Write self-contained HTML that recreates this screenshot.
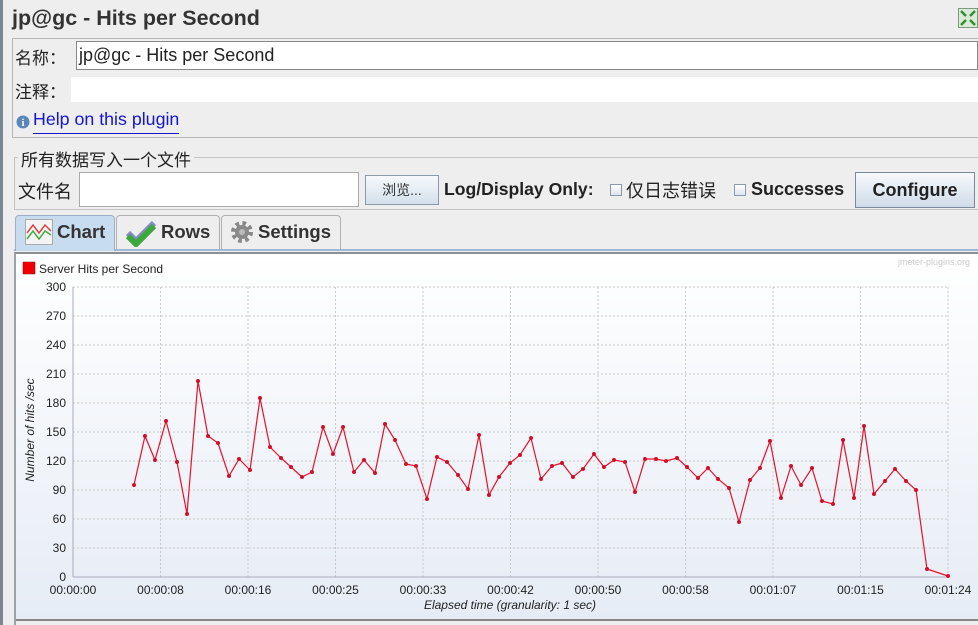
<!DOCTYPE html>
<html><head><meta charset="utf-8"><style>
*{margin:0;padding:0;box-sizing:border-box}
body{width:978px;height:625px;overflow:hidden;background:#eeeeee;font-family:"Liberation Sans","Noto Sans CJK SC",sans-serif;position:relative;color:#222}
.a{position:absolute}
.cn{font-family:"Liberation Sans","Noto Sans CJK SC",sans-serif}
</style></head><body>
<div class="a" style="left:0;top:0;width:3px;height:625px;background:#7a8594"></div>
<div class="a" style="left:12px;top:6px;font-size:21.5px;font-weight:bold;color:#333">jp@gc - Hits per Second</div>
<svg class="a" style="left:958px;top:8px" width="20" height="20"><rect x="0.5" y="0.5" width="19" height="19" fill="#d8ecd8" stroke="#7a9a7a"/><path d="M3 3l5 5M17 3l-5 5M3 17l5-5M17 17l-5-5" stroke="#3a8a3a" stroke-width="2.5"/></svg>
<div class="a" style="left:12px;top:38px;width:970px;height:100px;border:1px solid #b8b8b8"></div>
<div class="a cn" style="left:15px;top:44px;font-size:17px">名称：</div>
<div class="a" style="left:76px;top:41px;width:902px;height:29px;background:#fff;border:1px solid #888"></div>
<div class="a" style="left:79px;top:45px;font-size:18px;color:#222">jp@gc - Hits per Second</div>
<div class="a cn" style="left:15px;top:78px;font-size:17px">注释：</div>
<div class="a" style="left:71px;top:77px;width:907px;height:25px;background:#fff"></div>
<svg class="a" style="left:16px;top:115px" width="14" height="14"><circle cx="7" cy="7" r="6.5" fill="#5a86b8"/><text x="7" y="11" font-size="10" font-weight="bold" fill="#fff" text-anchor="middle" font-family="Liberation Serif">i</text></svg>
<div class="a" style="left:33px;top:109px;font-size:17.8px;color:#1515cc;border-bottom:1px solid #1515cc;padding-bottom:3px">Help on this plugin</div>
<div class="a" style="left:14px;top:157px;width:966px;height:53px;border:1px solid #c4c4c4"></div>
<div class="a cn" style="left:18px;top:146px;font-size:17px;background:#eeeeee;padding:0 3px">所有数据写入一个文件</div>
<div class="a cn" style="left:18px;top:178px;font-size:18px">文件名</div>
<div class="a" style="left:79px;top:172px;width:280px;height:35px;background:#fff;border:1px solid #aaa"></div>
<div class="a cn" style="left:365px;top:175px;width:74px;height:30px;border:1px solid #8a9aaa;background:linear-gradient(#f6f9fc,#d4e0ec);font-size:14px;color:#333;text-align:center;line-height:28px">浏览...</div>
<div class="a" style="left:444px;top:179px;font-size:17.6px;font-weight:bold">Log/Display Only:</div>
<div class="a" style="left:610px;top:184px;width:12px;height:12px;border:1px solid #8a9aaa;background:linear-gradient(#fff,#dde4ec)"></div>
<div class="a cn" style="left:626px;top:177px;font-size:18px">仅日志错误</div>
<div class="a" style="left:734px;top:184px;width:12px;height:12px;border:1px solid #8a9aaa;background:linear-gradient(#fff,#dde4ec)"></div>
<div class="a" style="left:751px;top:179px;font-size:18px;font-weight:bold">Successes</div>
<div class="a" style="left:855px;top:172px;width:120px;height:36px;border:1px solid #7a8a9a;background:linear-gradient(#f6f9fc,#d0dcea);font-size:18px;font-weight:bold;text-align:center;line-height:34px">Configure</div>
<div class="a" style="left:14px;top:249px;width:966px;height:2px;background:#9fb8d4"></div>
<div class="a" style="left:15px;top:215px;width:100px;height:36px;background:#c8dcf0;border:1px solid #9ab0c8;border-bottom:none;border-radius:4px 4px 0 0"></div>
<svg class="a" style="left:25px;top:219px" width="28" height="26"><rect x="0.5" y="0.5" width="27" height="25" fill="#f4f4f4" stroke="#aaa"/><path d="M2 14l6-8 6 8 6-8 6 6" stroke="#d44" fill="none" stroke-width="1.5"/><path d="M2 20l6-8 6 8 6-8 6 4" stroke="#4a4" fill="none" stroke-width="1.5"/></svg>
<div class="a" style="left:57px;top:221px;font-size:18.5px;font-weight:bold;color:#333">Chart</div>
<div class="a" style="left:116px;top:215px;width:104px;height:34px;border:1px solid #b0b0b0;border-bottom:none;border-radius:4px 4px 0 0"></div>
<svg class="a" style="left:125px;top:217px" width="32" height="30"><path d="M3 16l8 8 18-18" stroke="#8a8ac8" stroke-width="6" fill="none"/><path d="M3 19l8 8 18-18" stroke="#3aa83a" stroke-width="6" fill="none"/></svg>
<div class="a" style="left:161px;top:221px;font-size:18.5px;font-weight:bold;color:#333">Rows</div>
<div class="a" style="left:221px;top:215px;width:120px;height:34px;border:1px solid #b0b0b0;border-bottom:none;border-radius:4px 4px 0 0"></div>
<svg class="a" style="left:230px;top:220px" width="24" height="24"><circle cx="12" cy="12" r="8.5" fill="none" stroke="#888" stroke-width="5" stroke-dasharray="3.5 3.2"/><circle cx="12" cy="12" r="7" fill="#8a8a8a"/><circle cx="12" cy="12" r="3" fill="#bbb"/></svg>
<div class="a" style="left:258px;top:221px;font-size:18.5px;font-weight:bold;color:#333">Settings</div>
<div class="a" style="left:14px;top:252px;width:966px;height:373px;border-left:2px solid #9aa3ad;border-top:2px solid #8a8f96"></div>
<svg class="a" style="left:16px;top:254px" width="962" height="367" viewBox="16 254 962 367">
<defs><linearGradient id="g" x1="0" y1="0" x2="0" y2="1"><stop offset="0" stop-color="#ffffff"/><stop offset="1" stop-color="#e6ecf5"/></linearGradient></defs>
<rect x="16" y="254" width="962" height="367" fill="url(#g)"/>
<line x1="16" y1="620" x2="978" y2="620" stroke="#888" stroke-width="2"/>
<text x="970" y="265" font-size="9" fill="#ccc" text-anchor="end" font-family="Liberation Sans">jmeter-plugins.org</text>
<rect x="23" y="262" width="12" height="12" fill="#e00" stroke="#900" stroke-width="0.5"/>
<text x="39" y="273" font-size="12" fill="#222" font-family="Liberation Sans">Server Hits per Second</text>
<g stroke="#c8c8c8" stroke-dasharray="2 2" stroke-width="1">
<line x1="73" y1="287" x2="948" y2="287"/><line x1="73" y1="316" x2="948" y2="316"/><line x1="73" y1="345" x2="948" y2="345"/><line x1="73" y1="374" x2="948" y2="374"/><line x1="73" y1="403" x2="948" y2="403"/><line x1="73" y1="432" x2="948" y2="432"/><line x1="73" y1="461" x2="948" y2="461"/><line x1="73" y1="490" x2="948" y2="490"/><line x1="73" y1="519" x2="948" y2="519"/><line x1="73" y1="548" x2="948" y2="548"/>
<line x1="160.5" y1="287" x2="160.5" y2="577"/><line x1="248" y1="287" x2="248" y2="577"/><line x1="335.5" y1="287" x2="335.5" y2="577"/><line x1="423" y1="287" x2="423" y2="577"/><line x1="510.5" y1="287" x2="510.5" y2="577"/><line x1="598" y1="287" x2="598" y2="577"/><line x1="685.5" y1="287" x2="685.5" y2="577"/><line x1="773" y1="287" x2="773" y2="577"/><line x1="860.5" y1="287" x2="860.5" y2="577"/><line x1="948" y1="287" x2="948" y2="577"/>
</g>
<line x1="73" y1="287" x2="73" y2="577" stroke="#aab" /><line x1="73" y1="577" x2="948" y2="577" stroke="#aab"/>
<g font-size="12" fill="#222" font-family="Liberation Sans" text-anchor="end">
<text x="66" y="291">300</text><text x="66" y="320">270</text><text x="66" y="349">240</text><text x="66" y="378">210</text><text x="66" y="407">180</text><text x="66" y="436">150</text><text x="66" y="465">120</text><text x="66" y="494">90</text><text x="66" y="523">60</text><text x="66" y="552">30</text><text x="66" y="581">0</text>
</g>
<g font-size="12" fill="#222" font-family="Liberation Sans" text-anchor="middle">
<text x="73" y="594">00:00:00</text><text x="160.5" y="594">00:00:08</text><text x="248" y="594">00:00:16</text><text x="335.5" y="594">00:00:25</text><text x="423" y="594">00:00:33</text><text x="510.5" y="594">00:00:42</text><text x="598" y="594">00:00:50</text><text x="685.5" y="594">00:00:58</text><text x="773" y="594">00:01:07</text><text x="860.5" y="594">00:01:15</text><text x="948" y="594">00:01:24</text>
<text x="510" y="609" font-style="italic">Elapsed time (granularity: 1 sec)</text>
<text transform="translate(34,430) rotate(-90)" font-style="italic">Number of hits /sec</text>
</g>
<polyline fill="none" stroke="#e8102a" stroke-width="1.2" points="134,485 145,436 155,460 166,421 177,462 187,514 198,381 208,436 218,443 229,476 239,459 250,470 260,398 270,447 281,458 291,467 302,477 312,472 323,427 333,454 343,427 354,472 364,460 375,473 385,424 395,440 406,464 416,466 427,499 437,457 447,462 458,475 468,489 479,435 489,495 499,477 510,463 520,455 531,438 541,479 552,466 562,463 573,477 583,469 594,454 604,467 614,460 625,462 635,492 645,459 656,459 666,461 677,458 687,467 698,478 708,468 718,479 729,488 739,522 750,480 760,468 770,441 781,498 791,466 801,485 812,468 822,501 833,504 843,440 854,498 864,426 874,494 885,481 895,469 906,481 916,490 927,569 948,576"/>
<g fill="#d0102a">
<circle cx="134" cy="485" r="2"/><circle cx="145" cy="436" r="2"/><circle cx="155" cy="460" r="2"/><circle cx="166" cy="421" r="2"/><circle cx="177" cy="462" r="2"/><circle cx="187" cy="514" r="2"/><circle cx="198" cy="381" r="2"/><circle cx="208" cy="436" r="2"/><circle cx="218" cy="443" r="2"/><circle cx="229" cy="476" r="2"/><circle cx="239" cy="459" r="2"/><circle cx="250" cy="470" r="2"/><circle cx="260" cy="398" r="2"/><circle cx="270" cy="447" r="2"/><circle cx="281" cy="458" r="2"/><circle cx="291" cy="467" r="2"/><circle cx="302" cy="477" r="2"/><circle cx="312" cy="472" r="2"/><circle cx="323" cy="427" r="2"/><circle cx="333" cy="454" r="2"/><circle cx="343" cy="427" r="2"/><circle cx="354" cy="472" r="2"/><circle cx="364" cy="460" r="2"/><circle cx="375" cy="473" r="2"/><circle cx="385" cy="424" r="2"/><circle cx="395" cy="440" r="2"/><circle cx="406" cy="464" r="2"/><circle cx="416" cy="466" r="2"/><circle cx="427" cy="499" r="2"/><circle cx="437" cy="457" r="2"/><circle cx="447" cy="462" r="2"/><circle cx="458" cy="475" r="2"/><circle cx="468" cy="489" r="2"/><circle cx="479" cy="435" r="2"/><circle cx="489" cy="495" r="2"/><circle cx="499" cy="477" r="2"/><circle cx="510" cy="463" r="2"/><circle cx="520" cy="455" r="2"/><circle cx="531" cy="438" r="2"/><circle cx="541" cy="479" r="2"/><circle cx="552" cy="466" r="2"/><circle cx="562" cy="463" r="2"/><circle cx="573" cy="477" r="2"/><circle cx="583" cy="469" r="2"/><circle cx="594" cy="454" r="2"/><circle cx="604" cy="467" r="2"/><circle cx="614" cy="460" r="2"/><circle cx="625" cy="462" r="2"/><circle cx="635" cy="492" r="2"/><circle cx="645" cy="459" r="2"/><circle cx="656" cy="459" r="2"/><circle cx="666" cy="461" r="2"/><circle cx="677" cy="458" r="2"/><circle cx="687" cy="467" r="2"/><circle cx="698" cy="478" r="2"/><circle cx="708" cy="468" r="2"/><circle cx="718" cy="479" r="2"/><circle cx="729" cy="488" r="2"/><circle cx="739" cy="522" r="2"/><circle cx="750" cy="480" r="2"/><circle cx="760" cy="468" r="2"/><circle cx="770" cy="441" r="2"/><circle cx="781" cy="498" r="2"/><circle cx="791" cy="466" r="2"/><circle cx="801" cy="485" r="2"/><circle cx="812" cy="468" r="2"/><circle cx="822" cy="501" r="2"/><circle cx="833" cy="504" r="2"/><circle cx="843" cy="440" r="2"/><circle cx="854" cy="498" r="2"/><circle cx="864" cy="426" r="2"/><circle cx="874" cy="494" r="2"/><circle cx="885" cy="481" r="2"/><circle cx="895" cy="469" r="2"/><circle cx="906" cy="481" r="2"/><circle cx="916" cy="490" r="2"/><circle cx="927" cy="569" r="2"/><circle cx="948" cy="576" r="2"/>
</g>
</svg>
</body></html>
